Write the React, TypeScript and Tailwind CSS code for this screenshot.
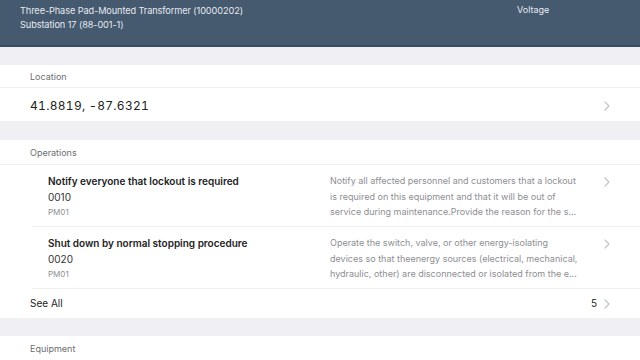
import React from "react";

const Chevron = () => (
  <svg width="6" height="10" viewBox="0 0 6 10" className="shrink-0">
    <path d="M1 1 L5 5 L1 9" fill="none" stroke="#c4c4c9" strokeWidth="1.2" strokeLinecap="round" strokeLinejoin="round" />
  </svg>
);

const ops = [
  {
    title: "Notify everyone that lockout is required",
    code: "0010",
    type: "PM01",
    desc: [
      "Notify all affected personnel and customers that a lockout",
      "is required on this equipment and that it will be out of",
      "service during maintenance.Provide the reason for the s...",
    ],
  },
  {
    title: "Shut down by normal stopping procedure",
    code: "0020",
    type: "PM01",
    desc: [
      "Operate the switch, valve, or other energy-isolating",
      "devices so that theenergy sources (electrical, mechanical,",
      "hydraulic, other) are disconnected or isolated from the e...",
    ],
  },
];

export default function App() {
  return (
    <div className="w-[640px] h-[360px] overflow-hidden bg-[#efeff4] text-[#222]" style={{ fontFamily: "Inter, 'Open Sans', sans-serif" }}>
      <div className="h-[47px] bg-[#45596f] border-b-2 border-[#3b4d61] flex justify-between text-[#e6eaf0]">
        <div className="pl-5 pt-[4px] text-[9.2px] leading-[14px] tracking-[-0.1px]">
          <div>Three-Phase Pad-Mounted Transformer (10000202)</div>
          <div>Substation 17 (88-001-1)</div>
        </div>
        <div className="w-[123px] pt-[3px] text-[9px] leading-[13px]">Voltage</div>
      </div>
      <div className="h-[18px]" />
      <div className="bg-white">
        <div className="h-[23px] flex items-center pt-[2px] pl-[30px] text-[9px] text-[#6d6d72] border-b border-[#f0f0f2]">Location</div>
        <div className="h-[33px] flex items-center justify-between pt-[2px] pl-[30px] pr-[30px] text-[12px] tabular-nums tracking-[0.3px] text-[#222]">
          <span>41.8819, -87.6321</span>
          <Chevron />
        </div>
      </div>
      <div className="h-[19px]" />
      <div className="bg-white">
        <div className="h-[25px] flex items-center pt-[2px] pl-[30px] text-[9px] text-[#6d6d72] border-b border-[#f0f0f2]">Operations</div>
        {ops.map((o, i) => (
          <div key={i} className="pl-[32px]">
            <div className="h-[62px] flex border-b border-[#f0f0f2] pr-[30px]">
              <div className="w-[298px] pl-4 pt-[8px]">
                <div className="text-[10px] font-semibold leading-[16px] text-[#222]">{o.title}</div>
                <div className="text-[10px] leading-[16px] text-[#333]">{o.code}</div>
                <div className="text-[8px] leading-[14px] text-[#8e8e93]">{o.type}</div>
              </div>
              <div className="flex-1 pt-[8px] text-[9px] leading-[15.5px] text-[#8e8e93] whitespace-nowrap">
                {o.desc.map((d, j) => (
                  <div key={j}>{d}</div>
                ))}
              </div>
              <div className="pt-[12px]">
                <Chevron />
              </div>
            </div>
          </div>
        ))}
        <div className="h-[29px] flex items-center justify-between pl-[30px] pr-[30px] text-[10px] text-[#222]">
          <span>See All</span>
          <span className="flex items-center gap-[7px]">
            <span>5</span>
            <Chevron />
          </span>
        </div>
      </div>
      <div className="h-[18px]" />
      <div className="bg-white">
        <div className="h-[25px] flex items-center pt-[2px] pl-[30px] text-[9px] text-[#6d6d72] border-b border-[#f0f0f2]">Equipment</div>
      </div>
    </div>
  );
}
